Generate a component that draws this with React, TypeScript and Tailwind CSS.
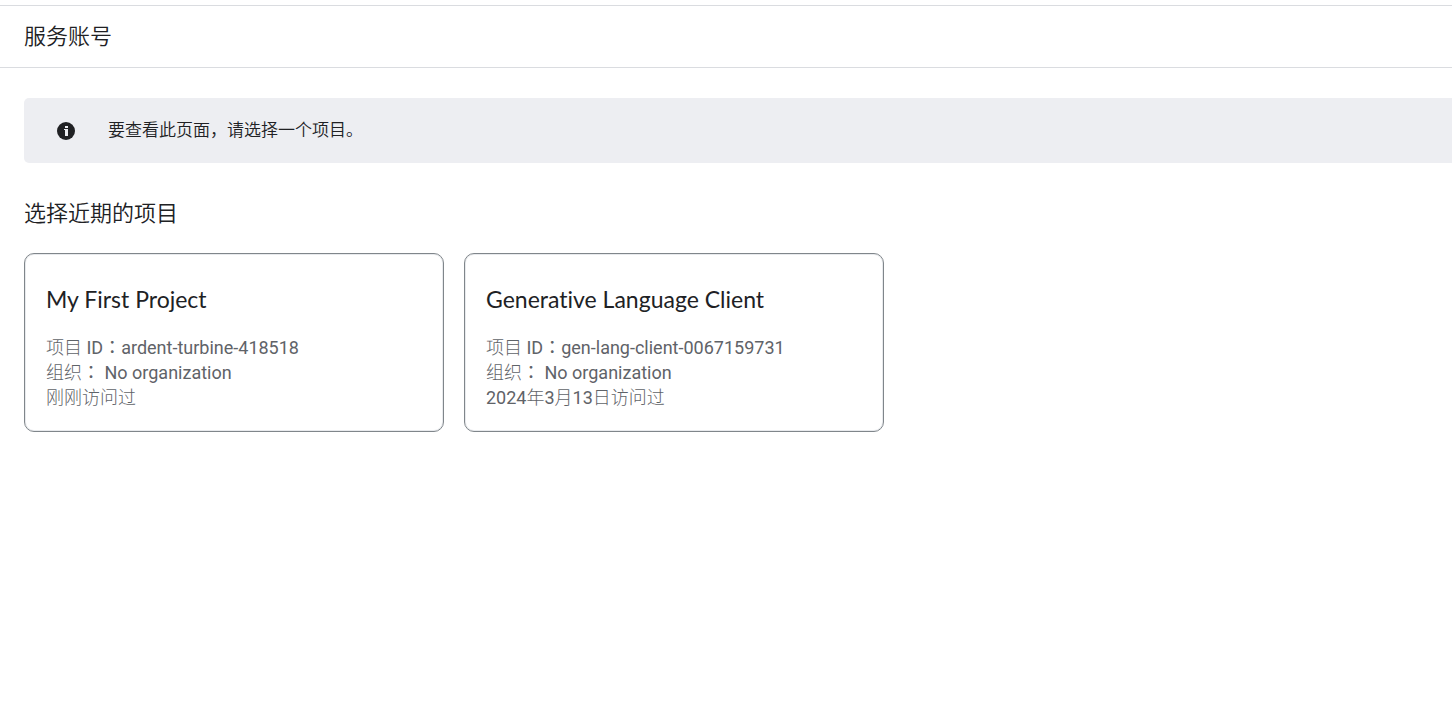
type Project = {
  name: string;
  id: string;
  organization: string;
  visited: string;
};

const projects: Project[] = [
  {
    name: "My First Project",
    id: "ardent-turbine-418518",
    organization: "No organization",
    visited: "刚刚访问过",
  },
  {
    name: "Generative Language Client",
    id: "gen-lang-client-0067159731",
    organization: "No organization",
    visited: "2024年3月13日访问过",
  },
];

function Colon() {
  return (
    <span lang="zh-TW" className="font-['Noto_Sans_CJK_TC',sans-serif] leading-none">
      ：
    </span>
  );
}

function InfoIcon() {
  return (
    <svg viewBox="0 0 18 18" className="size-[18px] shrink-0" aria-hidden="true">
      <circle cx="9" cy="9" r="9" fill="#202124" />
      <path d="M8 4h3v2H8zM7 7h4v7H8V8H7z" fill="#edeef2" />
    </svg>
  );
}

function ProjectCard({ project }: { project: Project }) {
  return (
    <button
      type="button"
      className="w-full max-w-[420px] cursor-pointer rounded-[10px] border border-[#80868b] bg-white px-[21px] pt-[29px] pb-[21px] text-left shadow-[inset_0_0_0_1px_#e8eaed]"
    >
      <h3 className="mb-5 font-['Lato','Noto_Sans_CJK_SC',sans-serif] text-[23px] leading-8 [font-variant-ligatures:none]">
        {project.name}
      </h3>
      <div className="font-['Roboto','Noto_Sans_CJK_SC_Light','Noto_Sans_CJK_SC',sans-serif] text-lg leading-[25px] text-[#5f6368]">
        <p>
          项目 ID
          <Colon />
          {project.id}
        </p>
        <p>
          组织
          <Colon /> {project.organization}
        </p>
        <p>{project.visited}</p>
      </div>
    </button>
  );
}

export default function App() {
  return (
    <div
      lang="zh-CN"
      className="min-h-screen overflow-x-hidden bg-white pt-[5px] font-['Roboto','Noto_Sans_CJK_SC',sans-serif] text-[#202124]"
    >
      <header className="border-y border-[#dadce0] px-6 py-[14px]">
        <h1 className="text-[22px] leading-[33px] font-[350]">服务账号</h1>
      </header>
      <main className="pt-[30px] pl-6">
        <div
          role="status"
          className="flex items-center gap-[33px] rounded-l-[5px] bg-[#edeef2] px-[33px] py-5"
        >
          <InfoIcon />
          <p className="text-[17px] leading-[25px] font-[350]">要查看此页面，请选择一个项目。</p>
        </div>
        <section className="pt-[34px] pr-6">
          <h2 className="text-[22px] leading-[33px] font-[350]">选择近期的项目</h2>
          <div className="mt-[23px] flex flex-wrap gap-5">
            {projects.map((project) => (
              <ProjectCard key={project.id} project={project} />
            ))}
          </div>
        </section>
      </main>
    </div>
  );
}
